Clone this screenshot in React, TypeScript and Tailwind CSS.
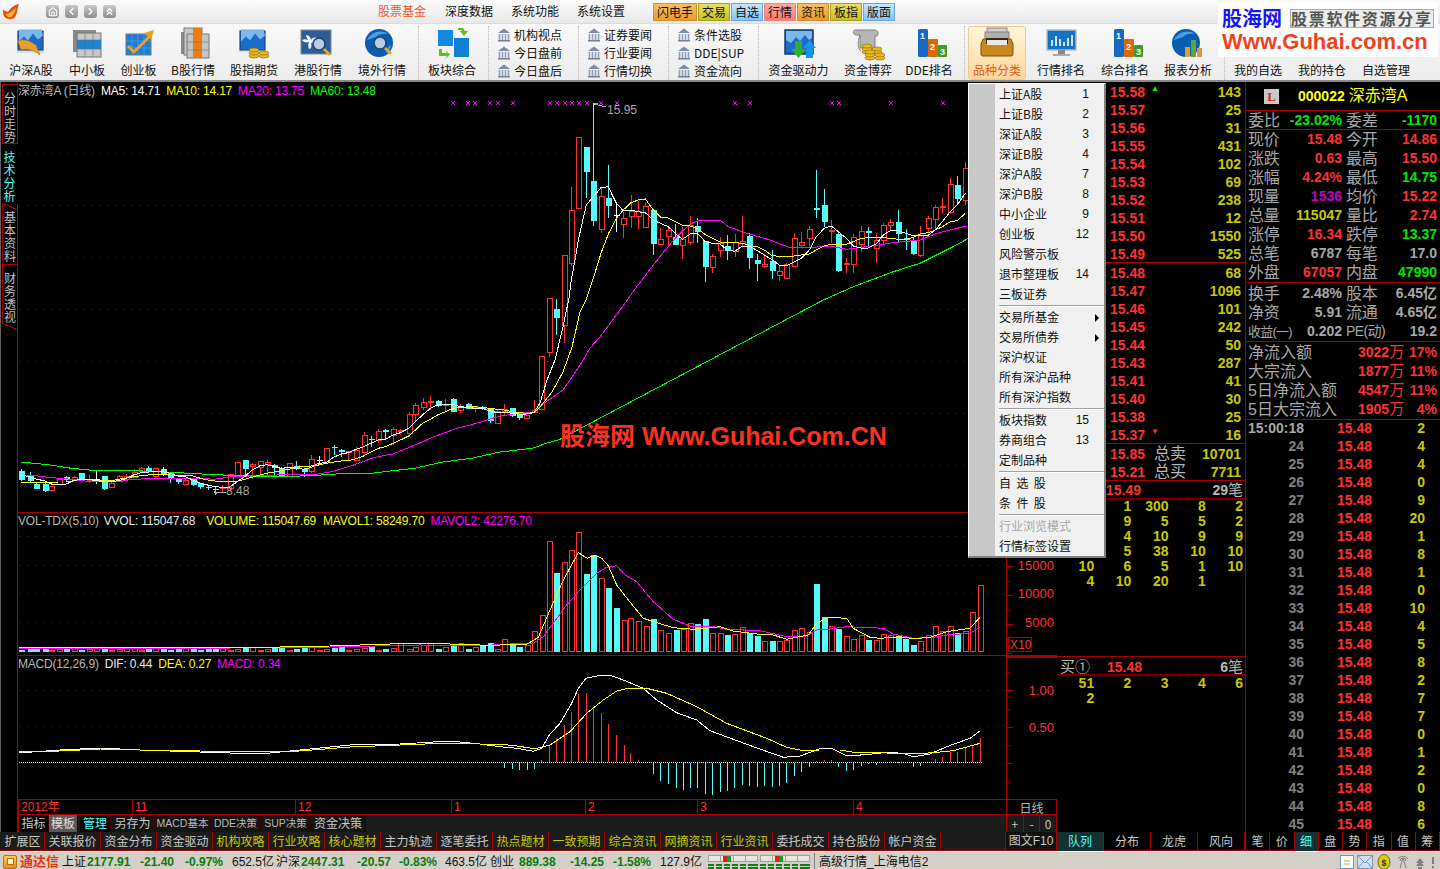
import React from "react";
import { Home, ChevronLeft, ChevronRight, ChevronsUp } from "lucide-react";

type P = [number, number];
const z8 = (x: number, y: number): P => [x / 2.8, 380 + y / 3];
const z9 = (x: number, y: number): P => [520 + x / 3, 90 + y / 3];
const z10 = (x: number, y: number): P => [500 + x / 3, 530 + y / 3];
const pts = (a: P[]) => a.map((p) => `${p[0].toFixed(1)},${p[1].toFixed(1)}`).join(" ");
const seq = (f: (x: number, y: number) => P, a: number[]) => {
  const r: P[] = [];
  for (let i = 0; i < a.length; i += 2) r.push(f(a[i], a[i + 1]));
  return r;
};

const RED = "#ff3232";
const CY = "#54fcfc";
const AX = "#a80000";
const DOT = "#7a1010";

// x, bodyTop, bodyBot, wickTop, wickBot, kind
type C = [number, number, number, number, number, string];
const c8: C[] = ([
  [60, 272, 298, 268, 302, "c"], [83, 285, 303, 277, 310, "c"], [102, 312, 328, 310, 328, "c"], [125, 312, 333, 310, 335, "c"],
  [144, 317, 330, 317, 336, "r"], [165, 296, 312, 294, 312, "r"], [186, 292, 300, 288, 305, "c"], [206, 290, 300, 288, 302, "r"],
  [228, 280, 297, 280, 300, "c"], [248, 297, 300, 285, 310, "r"], [270, 298, 299, 272, 312, "w"], [290, 288, 327, 288, 330, "c"],
  [310, 308, 321, 306, 324, "r"], [332, 288, 302, 284, 304, "r"], [352, 288, 297, 282, 300, "r"], [374, 275, 291, 267, 292, "r"],
  [394, 264, 272, 262, 273, "r"], [415, 263, 276, 258, 278, "c"], [435, 265, 290, 265, 298, "r"], [456, 268, 285, 262, 288, "c"],
  [477, 280, 295, 275, 310, "c"], [498, 296, 304, 296, 312, "c"], [518, 300, 311, 298, 312, "r"], [540, 298, 317, 296, 318, "c"],
  [561, 308, 320, 308, 328, "c"], [581, 322, 324, 315, 330, "c"], [602, 328, 332, 320, 345, "c"], [622, 322, 325, 315, 335, "r"],
  [643, 283, 325, 283, 330, "r"], [664, 247, 290, 247, 292, "r"], [685, 240, 268, 240, 285, "c"], [706, 253, 259, 250, 285, "r"],
  [727, 244, 262, 244, 290, "r"], [747, 246, 252, 240, 285, "r"], [768, 255, 263, 253, 285, "c"], [788, 265, 288, 260, 290, "c"],
  [810, 250, 288, 250, 290, "r"], [830, 258, 265, 244, 270, "c"], [851, 268, 276, 264, 290, "c"], [872, 238, 275, 225, 280, "r"],
  [892, 240, 241, 228, 250, "w"], [913, 205, 245, 205, 248, "r"], [934, 200, 204, 196, 225, "c"], [955, 209, 215, 207, 230, "c"],
  [975, 214, 217, 212, 242, "r"], [997, 209, 238, 200, 240, "r"], [1018, 166, 218, 156, 222, "r"], [1038, 178, 182, 168, 200, "c"],
  [1059, 153, 180, 146, 190, "r"], [1079, 150, 155, 147, 180, "c"], [1101, 148, 165, 140, 195, "r"], [1121, 149, 152, 148, 165, "r"],
  [1144, 103, 160, 95, 170, "r"], [1163, 75, 103, 70, 125, "r"], [1183, 65, 80, 55, 90, "r"], [1205, 62, 65, 47, 90, "r"],
  [1225, 62, 78, 60, 80, "c"], [1247, 72, 74, 58, 92, "r"], [1267, 57, 95, 55, 97, "c"], [1288, 78, 90, 73, 100, "r"],
  [1309, 72, 86, 70, 88, "c"], [1329, 82, 86, 78, 95, "r"], [1350, 82, 87, 78, 90, "c"], [1371, 88, 125, 85, 130, "c"],
  [1392, 93, 128, 88, 132, "r"], [1412, 88, 95, 72, 105, "r"], [1433, 85, 110, 83, 112, "c"], [1454, 100, 115, 95, 120, "c"],
  [1474, 105, 115, 100, 118, "r"], [1495, 90, 97, 60, 100, "r"],
] as C[]);
const c9: C[] = [
  [154, 360, 520, 290, 528, "r"], [175, 142, 356, 142, 356, "r"], [199, 171, 245, 171, 325, "c"], [220, 273, 392, 40, 408, "c"],
  [243, 318, 417, 290, 428, "r"], [265, 325, 350, 225, 384, "c"], [289, 375, 376, 335, 425, "w"], [310, 385, 403, 365, 445, "r"],
  [332, 362, 376, 315, 413, "r"], [355, 362, 377, 333, 418, "r"], [376, 348, 410, 338, 410, "r"], [400, 360, 461, 360, 494, "c"],
  [421, 448, 463, 415, 465, "r"], [445, 420, 437, 410, 470, "r"], [466, 441, 464, 402, 465, "c"], [487, 446, 464, 412, 508, "r"],
  [511, 405, 455, 378, 465, "r"], [532, 408, 426, 384, 458, "c"], [556, 454, 533, 452, 575, "c"], [577, 498, 532, 492, 548, "r"],
  [600, 460, 482, 440, 502, "r"], [622, 468, 484, 436, 510, "c"], [644, 456, 482, 432, 502, "r"], [667, 452, 459, 378, 468, "r"],
  [688, 438, 503, 430, 537, "c"], [712, 511, 524, 492, 572, "c"], [733, 523, 529, 492, 533, "r"], [757, 513, 542, 480, 568, "c"],
  [778, 544, 556, 525, 572, "r"], [799, 521, 562, 518, 562, "r"], [823, 445, 529, 430, 530, "r"], [844, 455, 464, 425, 475, "r"],
  [868, 418, 445, 408, 475, "r"], [889, 355, 361, 240, 384, "c"], [913, 346, 398, 297, 412, "c"], [934, 421, 424, 390, 460, "r"],
  [955, 432, 543, 430, 545, "c"], [979, 520, 523, 505, 550, "r"], [1000, 440, 520, 432, 548, "r"], [1024, 424, 464, 408, 485, "r"],
  [1045, 423, 430, 410, 468, "c"], [1069, 451, 475, 430, 518, "r"], [1090, 406, 452, 400, 465, "r"], [1111, 397, 406, 388, 422, "r"],
  [1135, 396, 431, 360, 458, "c"], [1157, 445, 451, 418, 480, "c"], [1180, 450, 491, 440, 495, "c"], [1201, 434, 494, 408, 502, "r"],
  [1225, 385, 415, 378, 425, "r"], [1246, 352, 388, 345, 420, "r"], [1267, 348, 352, 325, 368, "r"], [1291, 283, 368, 265, 372, "r"],
  [1312, 285, 326, 258, 345, "c"], [1336, 235, 331, 215, 345, "r"],
];
const candles: C[] = [
  ...c8.map((c): C => {
    const [x, a] = z8(c[0], c[1]);
    return [x, a, z8(0, c[2])[1], z8(0, c[3])[1], z8(0, c[4])[1], c[5]];
  }),
  [541, 356, 409, 356, 409, "r"], [549, 298, 352, 298, 357, "r"], [556, 309, 318, 299, 335, "c"], [564, 255, 325, 255, 343, "r"],
  ...c9.map((c): C => {
    const [x, a] = z9(c[0], c[1]);
    return [x, a, z9(0, c[2])[1], z9(0, c[3])[1], z9(0, c[4])[1], c[5]];
  }),
];

const ma5 = [
  ...seq(z8, [60,285,83,290,102,298,125,302,144,312,165,312,186,312,206,302,228,297,248,298,270,302,290,305,310,305,332,302,352,296,374,285,394,278,415,276,435,275,456,275,477,280,498,288,518,290,540,300,561,310,581,315,602,320,622,322,643,322,664,305,685,290,706,270,727,258,747,254,768,260,788,265,810,262,830,265,851,268,872,262,892,250,913,248,934,232,955,222,975,218,997,208,1018,200,1038,190,1059,180,1079,178,1101,165,1121,158,1144,145,1163,125,1183,105,1205,85,1225,75,1247,72,1267,72,1288,80,1309,82,1329,85,1350,85,1371,92,1392,98,1412,97,1433,100,1454,102,1474,102,1495,98]),
  [540,403],[547,380],[555,360],[563,327],[569,298] as P,
  ...seq(z9, [154,570,165,510,175,450,199,345,220,320,243,293,265,290,289,340,310,362,332,360,355,365,376,368,400,390,421,400,445,410,466,430,487,448,511,432,532,430,556,455,577,460,600,462,622,480,644,484,667,468,688,468,712,482,733,495,757,510,778,525,799,528,823,515,844,505,868,480,889,440,913,415,934,408,955,425,979,445,1000,468,1024,474,1045,474,1069,462,1090,435,1111,422,1135,422,1157,430,1180,437,1201,437,1225,436,1246,420,1267,395,1291,365,1312,345,1336,310]),
] as P[];
const ma10 = [
  ...seq(z8, [60,307,83,307,125,307,165,306,186,306,206,302,228,298,248,298,270,300,290,303,310,302,332,298,352,294,374,290,394,287,415,285,456,284,477,285,518,287,540,288,561,295,581,300,602,303,643,306,664,304,685,298,706,292,727,285,747,280,768,276,788,272,810,268,830,262,851,258,872,258,892,255,913,250,934,246,955,243,975,242,997,236,1018,228,1038,216,1059,205,1079,200,1101,190,1121,180,1144,168,1163,150,1183,130,1205,118,1225,105,1247,95,1267,85,1288,82,1329,80,1350,82,1371,85,1392,88,1412,90,1433,95,1454,98,1474,100,1495,98]),
  [540,407],[552,392],[563,372],[572,347],[580,312] as P,
  ...seq(z9, [198,630,220,565,243,490,265,432,289,385,310,360,332,338,355,330,376,327,400,360,421,381,445,384,466,395,487,405,511,408,532,415,556,434,577,445,600,456,622,458,644,458,667,460,688,466,712,470,733,480,757,497,778,499,799,499,823,498,844,495,868,492,889,480,913,468,934,463,979,463,1000,455,1024,445,1045,443,1090,443,1111,445,1135,448,1157,449,1180,442,1201,432,1225,428,1246,420,1267,410,1291,395,1312,392,1336,370]),
] as P[];
const ma20 = [
  ...seq(z8, [60,285,100,287,145,293,200,298,260,306,320,304,380,298,440,294,500,294,560,295,600,298,650,290,720,287,800,284,880,284,930,275,990,255,1050,232,1100,222,1160,196,1220,168,1280,145,1340,128,1400,108,1450,100,1495,97]),
  [540,406],[553,397],[563,390],[572,377],[582,362],[590,348],[600,337] as P,
  ...seq(z9, [322,630,350,590,400,525,440,475,470,440,510,402,540,390,600,390,625,410,680,430,750,450,810,473,880,472,930,468,980,478,1040,470,1120,458,1200,450,1250,430,1340,408]),
] as P[];
const ma60 = [
  ...seq(z8, [60,246,140,255,200,265,270,272,400,273,500,278,600,284,700,288,840,288,900,285,940,282,1030,281,1100,272,1160,265,1240,246,1320,235,1400,216,1490,205,1530,190,1568,178]),
  ...seq(z9, [910,630,1000,590,1120,545,1200,520,1290,475,1346,445]),
] as P[];

const marks = [453,468,475,490,498,513,550,557,565,572,579,587,601,617,735,750,832,839,891,943,983];

const volR: [number, number, string][] = [
  [13,328,"r"],[37,345,"c"],[58,351,"c"],[80,345,"r"],[103,304,"r"],[125,256,"r"],[148,34,"r"],[169,129,"c"],[193,97,"r"],[214,61,"r"],[235,7,"r"],[259,132,"c"],[280,76,"c"],[304,145,"r"],[325,174,"c"],[349,234,"c"],[371,271,"r"],[391,265,"r"],[415,274,"r"],[437,289,"r"],[460,267,"c"],[481,301,"r"],[505,310,"r"],[527,300,"c"],[548,298,"r"],[571,280,"r"],[592,283,"c"],[616,267,"c"],[637,310,"r"],[661,310,"r"],[682,315,"c"],[703,313,"r"],[727,292,"r"],[748,308,"c"],[772,318,"c"],[793,334,"r"],[817,333,"c"],[838,333,"r"],[859,330,"r"],[883,301,"r"],[904,295,"r"],[927,307,"r"],[949,162,"c"],[973,261,"c"],[994,289,"r"],[1015,297,"c"],[1039,319,"r"],[1060,328,"r"],[1084,316,"r"],[1105,330,"c"],[1129,330,"r"],[1150,313,"r"],[1171,316,"r"],[1195,318,"c"],[1216,327,"c"],[1240,345,"c"],[1261,334,"r"],[1285,316,"r"],[1306,289,"r"],[1327,304,"r"],[1351,289,"r"],[1372,309,"c"],[1396,304,"r"],[1417,247,"r"],[1441,166,"r"],
];
const volTop = 652;
const volLeft = candles.filter((c) => c[0] < 498).map((c, i) => ({
  x: c[0],
  top: volTop - (2 + ((i * 37) % 4) + (c[0] > 400 ? 1 + ((i * 13) % 4) : 0)),
  k: c[5] === "c" ? "c" : "r",
}));
const volYellow = [[19,647],[120,647],[230,648],[330,646],[420,643],[480,645] as P].concat(seq(z10, [0,345,80,343,115,322,150,240,190,150,235,68,262,85,285,75,305,85,325,107,350,165,385,210,430,265,470,278,520,293,580,298,660,290,700,303,770,312,820,315,860,328,925,315,950,280,985,262,1040,265,1060,295,1110,322,1140,325,1200,320,1240,326,1290,322,1340,305,1410,295,1440,262])) as P[];
const volMag = [[19,648],[120,648],[230,648],[330,647],[420,645],[480,646] as P].concat(seq(z10, [0,343,100,340,130,320,200,225,240,180,290,130,320,112,350,107,375,135,410,155,460,215,520,268,570,288,640,290,680,298,780,302,860,320,920,318,950,300,990,297,1040,290,1150,295,1180,312,1240,325,1300,322,1340,315,1410,310,1440,292])) as P[];

const macdBars: [number, number][] = [
  [13,714],[37,717],[58,720],[80,720],[103,716],[124,690],[148,643],[169,625],[193,585],[214,546],[235,492],[259,489],[280,530],[304,549],[325,582],[349,615],[371,645],[391,669],[415,690],[460,732],[481,752],[505,762],[527,773],[548,779],[571,774],[592,773],[616,791],[637,794],[661,785],[682,782],[703,774],[727,765],[748,768],[772,770],[793,768],[817,770],[838,768],[859,759],[883,738],[904,726],[927,711],[949,694],[973,690],[994,690],[1015,711],[1039,722],[1060,720],[1084,708],[1105,702],[1129,705],[1171,694],[1195,696],[1240,711],[1261,708],[1306,688],[1327,682],[1351,665],[1372,665],[1396,655],[1417,646],[1441,625],
];
const macdW = [[19,753],[60,750],[100,748],[140,750],[200,752],[260,754],[300,750],[350,745],[400,744],[450,741],[480,744] as P].concat(seq(z10, [0,650,50,655,100,664,125,655,148,615,180,580,215,520,235,475,258,445,300,436,330,436,370,450,430,475,470,510,530,548,590,570,630,602,700,628,760,650,850,682,900,678,960,656,1000,657,1040,677,1100,674,1160,667,1210,670,1240,680,1290,672,1340,650,1410,625,1440,603])) as P[];
const macdY = [[19,752],[60,751],[100,749],[140,750],[200,751],[260,752],[300,751],[350,747],[400,745],[450,743],[480,744] as P].concat(seq(z10, [0,642,50,648,105,656,150,645,210,605,260,550,310,510,350,483,385,475,440,475,500,490,590,530,680,580,800,625,860,652,905,661,960,660,1020,660,1060,667,1160,669,1250,671,1300,668,1360,662,1440,640])) as P[];

function Svg({ top, h, children }: { top: number; h: number; children: React.ReactNode }) {
  return (
    <svg className="absolute left-0 top-0" width={1039} height={h} viewBox={`18 ${top} 1039 ${h}`} shapeRendering="crispEdges">
      <rect x={1006} y={top} width={1} height={h} fill={AX} />
      {children}
    </svg>
  );
}
const Dots = ({ ys, c = DOT }: { ys: number[]; c?: string }) => (
  <>
    {ys.map((y) => (
      <line key={y} x1={19} x2={1006} y1={y + 0.5} y2={y + 0.5} stroke={c} strokeDasharray="1 7" />
    ))}
  </>
);
const Line = ({ p, c }: { p: P[]; c: string }) => <polyline points={pts(p)} fill="none" stroke={c} strokeWidth={1} />;

function PriceChart() {
  return (
    <Svg top={82} h={430}>
      <Dots ys={[153, 205, 257, 309, 361, 413, 465]} />
      {marks.map((x) => (
        <path key={x} d={`M${x - 2} 101l4 4M${x + 2} 101l-4 4`} stroke="#ff00ff" fill="none" />
      ))}
      {candles.map((c, i) => {
        const x = Math.round(c[0]);
        const col = c[5] === "r" ? RED : c[5] === "c" ? CY : "#ffffff";
        return (
          <g key={i}>
            {c[5] === "r" ? (
              <>
                <line x1={x + 0.5} x2={x + 0.5} y1={c[3]} y2={c[1]} stroke={col} />
                <line x1={x + 0.5} x2={x + 0.5} y1={c[2]} y2={c[4]} stroke={col} />
                <rect x={x - 2} y={Math.round(c[1]) + 0.5} width={5} height={Math.max(1, Math.round(c[2] - c[1]))} fill="#000" stroke={col} />
              </>
            ) : (
              <>
                <line x1={x + 0.5} x2={x + 0.5} y1={c[3]} y2={c[4]} stroke={col} />
                <rect x={x - 2} y={Math.round(c[1])} width={6} height={Math.max(1, Math.round(c[2] - c[1]))} fill={col} />
              </>
            )}
          </g>
        );
      })}
      <Line p={ma60} c="#00ff00" />
      <Line p={ma20} c="#ff00ff" />
      <Line p={ma10} c="#ffff00" />
      <Line p={ma5} c="#ffffff" />
      <path d="M594 104l4 -1M594 104l12 3" stroke="#b0b0b0" fill="none" />
      <text x={607} y={114} fontSize={12} fill="#a8a8a8" fontFamily="Liberation Sans">15.95</text>
      <path d="M214 492l3 -3M214 492l3 2M214 492h12" stroke="#b0b0b0" fill="none" />
      <text x={226} y={495} fontSize={12} fill="#a8a8a8" fontFamily="Liberation Sans">8.48</text>
    </Svg>
  );
}

function VolChart() {
  const ticks = [];
  for (let y = 537; y < 655; y += 14.5) ticks.push(y);
  return (
    <Svg top={513} h={143}>
      <rect x={18} y={655} width={1039} height={1} fill={AX} />
      <Dots ys={[536, 565, 593, 622]} />
      {volLeft.map((v, i) => {
        const x = Math.round(v.x);
        return v.k === "c" ? (
          <rect key={i} x={x - 2} y={v.top} width={6} height={volTop - v.top} fill={CY} />
        ) : (
          <rect key={i} x={x - 2} y={v.top + 0.5} width={5} height={volTop - v.top - 1} fill="#000" stroke={RED} />
        );
      })}
      {volR.map((v, i) => {
        const x = Math.round(500 + v[0] / 3);
        const t = Math.round(530 + v[1] / 3);
        return v[2] === "c" ? (
          <rect key={i} x={x - 2} y={t} width={6} height={volTop - t} fill={CY} />
        ) : (
          <rect key={i} x={x - 2} y={t + 0.5} width={5} height={volTop - t - 1} fill="#000" stroke={RED} />
        );
      })}
      <Line p={volMag} c="#ff00ff" />
      <Line p={volYellow} c="#ffff00" />
      {ticks.map((y, i) => (
        <rect key={y} x={1007} y={Math.round(y)} width={i % 2 === 0 ? 6 : 3} height={1} fill={AX} />
      ))}
      {[["15000", 570], ["10000", 598], ["5000", 627]].map(([t, y]) => (
        <text key={t} x={1054} y={Number(y)} textAnchor="end" fontSize={13} fill={RED} fontFamily="Liberation Sans">{t}</text>
      ))}
      <rect x={1008.5} y={637.5} width={23} height={14} fill="none" stroke={AX} />
      <text x={1010} y={649} fontSize={12} fill={RED} fontFamily="Liberation Sans">X10</text>
    </Svg>
  );
}

function MacdChart() {
  const ticks = [];
  for (let y = 672; y < 798; y += 18.3) ticks.push(y);
  return (
    <Svg top={656} h={143}>
      <rect x={1006} y={656} width={52} height={2} fill={AX} />
      <Dots ys={[690, 726]} />
      <line x1={19} x2={982} y1={762.5} y2={762.5} stroke="#ffffff" strokeDasharray="1 1" />
      {macdBars.map((b, i) => {
        const x = Math.round(500 + b[0] / 3);
        const y = 530 + b[1] / 3;
        return y < 762 ? (
          <line key={i} x1={x + 0.5} x2={x + 0.5} y1={y} y2={762} stroke={RED} />
        ) : (
          <line key={i} x1={x + 0.5} x2={x + 0.5} y1={763} y2={y} stroke={CY} />
        );
      })}
      <Line p={macdW} c="#ffffff" />
      <Line p={macdY} c="#ffff00" />
      {ticks.map((y, i) => (
        <rect key={y} x={1007} y={Math.round(y)} width={i % 2 === 1 ? 6 : 3} height={1} fill={AX} />
      ))}
      <text x={1054} y={695} textAnchor="end" fontSize={13} fill={RED} fontFamily="Liberation Sans">1.00</text>
      <text x={1054} y={732} textAnchor="end" fontSize={13} fill={RED} fontFamily="Liberation Sans">0.50</text>
    </Svg>
  );
}

/* ---------- toolbar icons ---------- */
const Blue = ({ x, y, w, h }: { x: number; y: number; w: number; h: number }) => (
  <>
    <rect x={x} y={y} width={w} height={h} fill="#1a6cc8" stroke="#1b3d6e" />
    <path d={`M${x + 1} ${y + h * 0.55}l5 -5 4 4 5 -7 5 6 5 -4 ${w - 26} -3v${-h * 0.15}H${x + 1}z`} fill="#7cb8ee" />
  </>
);
const Bars123 = () => (
  <g>
    <rect x={9} y={2} width={10} height={28} rx={1.5} fill="#1668c0" />
    <rect x={19} y={12} width={10} height={18} rx={1} fill="#d96a0c" />
    <rect x={29} y={18} width={9} height={12} rx={1} fill="#3f9a2f" />
    <text x={11} y={12} fontSize={9} fontWeight={700} fill="#fff" fontFamily="Liberation Sans">1</text>
    <text x={21} y={23} fontSize={9} fontWeight={700} fill="#fff" fontFamily="Liberation Sans">2</text>
    <text x={31} y={28} fontSize={9} fontWeight={700} fill="#fff" fontFamily="Liberation Sans">3</text>
  </g>
);
const Coins = ({ x, y }: { x: number; y: number }) => (
  <g fill="#e8b820" stroke="#8a6500" strokeWidth={0.6}>
    <ellipse cx={x} cy={y + 6} rx={5} ry={2} />
    <ellipse cx={x} cy={y + 3} rx={5} ry={2} />
    <ellipse cx={x} cy={y} rx={5} ry={2} />
    <ellipse cx={x + 10} cy={y + 6} rx={5} ry={2} />
    <ellipse cx={x + 10} cy={y + 3} rx={5} ry={2} />
  </g>
);
const Glass = ({ x, y, r = 6 }: { x: number; y: number; r?: number }) => (
  <g>
    <circle cx={x} cy={y} r={r} fill="#b8cce0" stroke="#26456e" strokeWidth={1.6} />
    <path d={`M${x + r - 1} ${y + r - 1}l6 6`} stroke="#e0a830" strokeWidth={2.6} />
  </g>
);
const Icon = ({ n }: { n: string }) => {
  const parts: Record<string, React.ReactNode> = {
    a: (
      <>
        <rect x={6} y={4} width={27} height={22} fill="#dcdcdc" />
        <Blue x={7} y={4} w={25} h={19} />
        <path d="M7 14c6-3 12 0 18 4l4 10c-6-5-12-7-19-5z" fill="#e8a22c" stroke="#a86a12" strokeWidth={0.6} />
      </>
    ),
    b: (
      <>
        <rect x={6} y={3} width={23} height={22} fill="#8a8a8a" />
        <rect x={10} y={6} width={24} height={24} fill="#c8c8c8" stroke="#777" />
        <rect x={10} y={13} width={24} height={9} fill="#1b86d8" />
        <path d="M18 6v24M26 6v24M10 13h24M10 22h24" stroke="#666" strokeWidth={0.6} />
      </>
    ),
    c: (
      <>
        <rect x={7} y={7} width={25} height={21} fill="#1f7bd6" stroke="#777" />
        <path d="M13 7v21M19 7v21M25 7v21M7 14h25M7 21h25" stroke="#5aa5e8" strokeWidth={0.6} />
        <path d="M9 19l6 6 15-15" fill="none" stroke="#f0a020" strokeWidth={3} />
        <path d="M25 6l10-3-3 10z" fill="#f0a020" />
      </>
    ),
    d: (
      <>
        <rect x={8} y={5} width={21} height={22} fill="#8a8a8a" />
        <rect x={11} y={1} width={18} height={27} fill="#c8c8c8" stroke="#777" />
        <rect x={14} y={7} width={22} height={24} fill="#c4c4c4" stroke="#777" />
        <rect x={20} y={1} width={9} height={30} fill="#ed7d12" />
        <path d="M14 15h22M14 23h22" stroke="#777" strokeWidth={0.6} />
      </>
    ),
    e: (
      <>
        <rect x={5} y={3} width={27} height={22} fill="#dcdcdc" />
        <Blue x={6} y={4} w={25} h={19} />
        <Coins x={20} y={23} />
      </>
    ),
    f: (
      <>
        <rect x={3} y={3} width={30} height={24} fill="#2c5f96" stroke="#888" />
        <path d="M8 8c3 0 5 3 5 5 2-3 6-3 6-1-2 3-4 4-6 4 1 3 0 6-2 6-1-3-1-5 0-7-3 1-6 0-7-2 2-1 4-1 6 0-1-2-2-3-2-5z" fill="#eef4fa" />
        <Glass x={21} y={17} r={6} />
      </>
    ),
    g: (
      <>
        <circle cx={17} cy={16} r={14} fill="#0a5cb0" />
        <path d="M5 13c4-8 14-11 21-6-6-1-10 0-12 3-3 1-6 2-9 3zM24 26c3-2 5-5 5-8-2 1-4 3-5 8z" fill="#4aa0e4" />
        <Glass x={18} y={16} r={6} />
      </>
    ),
    h: (
      <>
        <rect x={6} y={3} width={15} height={16} fill="#158ae0" />
        <rect x={22} y={11} width={15} height={19} fill="#1080d8" />
        <path d="M26 1h5l2 3h3l-4 5-4-5h2l-1-1h-3zM7 22h3v4h5l-2-3 5 4.500-5 4.500 2-3H7z" fill="#5cc020" />
      </>
    ),
    i: (
      <>
        <rect x={6} y={3} width={28} height={24} fill="#1a6cc8" stroke="#183a68" strokeWidth={1.5} />
        <path d="M7 13l5 3 5-6 4 4 5-6 4 5 3-2v-7H7z" fill="#7cb8ee" />
        <path d="M16 14h7v8h4l-7.500 9L12 22h4z" fill="#30b030" />
        <path d="M27 31v-10h-3l6.500-8 6.500 8h-3v10z" fill="#1a90e8" />
      </>
    ),
    j: (
      <>
        <path d="M7 3h20c3 0 4 4 2 6H27v12H12V8H8C5 8 5 3 7 3z" fill="#b6b6b6" stroke="#808080" />
        <path d="M12 8c-3 8-2 14 1 16" fill="none" stroke="#808080" />
        <Coins x={19} y={19} />
        <Coins x={22} y={25} />
      </>
    ),
    k: <Bars123 />,
    l: (
      <>
        <rect x={10} y={1} width={20} height={14} fill="#d0d0d0" stroke="#888" />
        <rect x={8} y={5} width={24} height={12} fill="#b0b0b0" stroke="#808080" />
        <path d="M6 12h28l2 5v10a2 2 0 0 1-2 2H6a2 2 0 0 1-2-2V17z" fill="#c88a1e" stroke="#7a5210" />
        <path d="M9 11h22v6H9z" fill="#3a2a10" />
        <path d="M10 13h20v5H10z" fill="#e8e8e8" />
      </>
    ),
    m: (
      <>
        <rect x={6} y={3} width={29} height={20} fill="#1172c8" stroke="#bbb" strokeWidth={1.5} />
        <path d="M11 19v-6M15 19v-10M19 19v-7M23 19v-4M27 19v-8M31 19v-11" stroke="#cde4fa" strokeWidth={2} />
        <rect x={17} y={23} width={7} height={4} fill="#888" />
        <rect x={12} y={27} width={17} height={2} fill="#aaa" />
      </>
    ),
    n: (
      <>
        <circle cx={18} cy={16} r={14} fill="#0a5cb0" />
        <path d="M6 13c4-8 14-11 21-6-6-1-10 0-12 3-3 1-6 2-9 3z" fill="#4aa0e4" />
        <rect x={17} y={20} width={5} height={10} fill="#e8a020" />
        <rect x={23} y={13} width={5} height={17} fill="#58a838" />
        <rect x={29} y={21} width={5} height={9} fill="#e89040" />
      </>
    ),
  };
  return (
    <svg width={40} height={34} viewBox="0 0 40 34" className="shrink-0">
      {parts[n]}
    </svg>
  );
};

const Bank = () => (
  <svg width={14} height={14} viewBox="0 0 14 14" className="shrink-0">
    <path d="M7 0.500L13 5H1z" fill="#7d8ea6" />
    <path d="M2.500 6v6M5.500 6v6M8.500 6v6M11.500 6v6" stroke="#8fa0b8" strokeWidth={1.6} />
    <rect x={1} y={12} width={12} height={1.5} fill="#6f8098" />
  </svg>
);

const Tool = ({ w, n, t, active }: { w: string; n: string; t: string; active?: boolean }) => (
  <div className={`${w} h-[54px] mt-[2px] flex flex-col items-center shrink-0 rounded-[3px] ${active ? "bg-gradient-to-b from-[#fff6dc] to-[#ffd69a] border border-[#f0c890]" : ""}`}>
    <div className={active ? "mt-[0px]" : "mt-[1px]"}>
      <Icon n={n} />
    </div>
    <div className={`text-[12px] leading-[14px] mt-[2px] whitespace-nowrap ${active ? "text-[#e8581a]" : "text-[#111]"}`}>{t}</div>
  </div>
);
const Sep = ({ w = "w-[10px]" }: { w?: string }) => (
  <div className={`${w} shrink-0 flex justify-center`}>
    <div className="h-[54px] mt-[2px] border-l border-dotted border-[#bbb]" />
  </div>
);
const Mini = ({ items }: { items: string[] }) => (
  <div className="w-[90px] shrink-0 h-[54px] mt-[2px] border-l border-dotted border-[#bbb] pl-[8px] flex flex-col">
    {items.map((t) => (
      <div key={t} className="h-[18px] flex items-center gap-[3px] text-[12px] whitespace-nowrap text-[#111]">
        <Bank />
        <span>{t}</span>
      </div>
    ))}
  </div>
);

const TopTab = ({ t, w, cls }: { t: string; w: string; cls: string }) => (
  <div className={`${w} h-[18px] flex items-center justify-center text-[12px] text-[#111] border ${cls}`}>{t}</div>
);
const NavBtn = ({ children }: { children: React.ReactNode }) => (
  <div className="w-[13px] h-[13px] rounded-[3px] bg-gradient-to-b from-[#c8c8c8] to-[#8e8e8e] flex items-center justify-center text-white">
    {children}
  </div>
);

function TopBar() {
  return (
    <div className="h-[23px] flex items-center bg-gradient-to-b from-[#fbfbfb] to-[#e8e8e8] shrink-0">
      <svg width={18} height={18} viewBox="0 0 18 18" className="ml-[2px] shrink-0">
        <path d="M1 7l5 2c2-3 5-7 11-8-2 4-1 9-4 13-2 3-9 3-11-1-1-2-1-4-1-6z" fill="#e84e14" />
        <path d="M4 11c3 0 6-3 10-6-1 3-2 7-5 9-2 1-5-1-5-3z" fill="#f7b02c" />
      </svg>
      <div className="ml-[26px] flex gap-[6px]">
        <NavBtn><Home size={10} strokeWidth={2.5} /></NavBtn>
        <NavBtn><ChevronLeft size={11} strokeWidth={3} /></NavBtn>
        <NavBtn><ChevronRight size={11} strokeWidth={3} /></NavBtn>
        <NavBtn><ChevronsUp size={11} strokeWidth={3} /></NavBtn>
      </div>
      <div className="ml-[262px] flex text-[12px] text-[#111] whitespace-nowrap pb-[1px]">
        <span className="w-[67px] text-[#f0562a]">股票基金</span>
        <span className="w-[66px]">深度数据</span>
        <span className="w-[66px]">系统功能</span>
        <span className="w-[76px]">系统设置</span>
      </div>
      <div className="flex gap-[1px]">
        <TopTab t="闪电手" w="w-[44px]" cls="bg-gradient-to-b from-[#f8c060] to-[#e89a28] border-[#d09030]" />
        <TopTab t="交易" w="w-[32px]" cls="bg-gradient-to-b from-[#e8e060] to-[#c8c020] border-[#a8a020]" />
        <TopTab t="自选" w="w-[32px]" cls="bg-gradient-to-b from-[#c8e4fc] to-[#88c4f4] border-[#60a8e8]" />
        <TopTab t="行情" w="w-[32px]" cls="bg-gradient-to-b from-[#ffa8a0] to-[#f87870] border-[#f08880]" />
        <TopTab t="资讯" w="w-[32px]" cls="bg-gradient-to-b from-[#f8c060] to-[#e89a28] border-[#d09030]" />
        <TopTab t="板指" w="w-[32px]" cls="bg-gradient-to-b from-[#e8e060] to-[#c8c020] border-[#a8a020]" />
        <TopTab t="版面" w="w-[32px]" cls="bg-gradient-to-b from-[#c8e4fc] to-[#88c4f4] border-[#60a8e8]" />
      </div>
    </div>
  );
}

function Toolbar() {
  return (
    <div className="relative h-[59px] shrink-0 flex bg-gradient-to-b from-[#f9f9f9] to-[#ececec] border-t border-[#dcdcdc] border-b-2 border-b-[#8a8a8a] pl-[2px]">
      <Tool w="w-[58px]" n="a" t="沪深A股" />
      <Tool w="w-[54px]" n="b" t="中小板" />
      <Tool w="w-[49px]" n="c" t="创业板" />
      <Tool w="w-[60px]" n="d" t="B股行情" />
      <Tool w="w-[62px]" n="e" t="股指期货" />
      <Tool w="w-[66px]" n="f" t="港股行情" />
      <Tool w="w-[62px]" n="g" t="境外行情" />
      <Sep />
      <Tool w="w-[58px]" n="h" t="板块综合" />
      <div className="w-[7px] shrink-0" />
      <Mini items={["机构视点", "今日盘前", "今日盘后"]} />
      <Mini items={["证券要闻", "行业要闻", "行情切换"]} />
      <Mini items={["条件选股", "DDE|SUP", "资金流向"]} />
      <div className="border-l border-dotted border-[#bbb] h-[54px] mt-[2px]" />
      <Tool w="w-[79px]" n="i" t="资金驱动力" />
      <Tool w="w-[60px]" n="j" t="资金博弈" />
      <Tool w="w-[62px]" n="k" t="DDE排名" />
      <Sep w="w-[8px]" />
      <Tool w="w-[58px]" n="l" t="品种分类" active />
      <Tool w="w-[70px]" n="m" t="行情排名" />
      <Tool w="w-[58px]" n="k" t="综合排名" />
      <Tool w="w-[68px]" n="n" t="报表分析" />
      <Sep w="w-[4px]" />
      <div className="w-[64px] shrink-0 pt-[39px] text-center text-[12px] leading-[14px] text-[#111]">我的自选</div>
      <div className="w-[64px] shrink-0 pt-[39px] text-center text-[12px] leading-[14px] text-[#111]">我的持仓</div>
      <div className="w-[64px] shrink-0 pt-[39px] text-center text-[12px] leading-[14px] text-[#111]">自选管理</div>
    </div>
  );
}

function Watermark() {
  return (
    <div className="absolute left-[1218px] top-[2px] w-[220px] h-[55px] bg-white/95 pl-[4px] pt-[3px]">
      <div className="flex items-center h-[26px]">
        <span className="text-[20px] leading-[24px] font-bold text-[#1414ff] w-[68px]">股海网</span>
        <span className="text-[16px] leading-[17px] w-[144px] text-[#555] bg-[#ececec] tracking-[1.7px] font-bold border border-[#aaa] whitespace-nowrap">股票软件资源分享</span>
      </div>
      <div className="text-[22px] leading-[22px] font-bold text-[#f0421a] whitespace-nowrap font-['Liberation_Sans']">Www.Guhai.com.cn</div>
    </div>
  );
}

/* ---------- chart headers ---------- */
const Num = "font-['Liberation_Sans','Noto_Sans_CJK_SC',sans-serif]";

function Center() {
  return (
    <div className="w-[1039px] shrink-0 flex flex-col">
      <div className="relative h-[430px]">
        <PriceChart />
        <div className={`relative h-[18px] flex items-center text-[12px] tracking-[-0.2px] ${Num} whitespace-nowrap gap-[6px]`}>
          <span className="text-[#b8b8b8]">深赤湾A (日线)</span>
          <span className="text-white">MA5: 14.71</span>
          <span className="text-[#ffff00]">MA10: 14.17</span>
          <span className="text-[#ff00ff]">MA20: 13.75</span>
          <span className="text-[#00ff00]">MA60: 13.48</span>
        </div>
        <div className={`absolute left-[542px] top-[338px] text-[25px] leading-[32px] font-bold text-[#ff3020] whitespace-nowrap ${Num}`}>股海网 Www.Guhai.Com.CN</div>
      </div>
      <div className="h-[1px] bg-[#a80000]" />
      <div className="relative h-[143px]">
        <VolChart />
        <div className={`relative h-[15px] flex items-center text-[12px] tracking-[-0.2px] ${Num} whitespace-nowrap`}>
          <span className="text-[#b8b8b8] mr-[5px]">VOL-TDX(5,10)</span>
          <span className="text-[#e8e8e8] mr-[11px]">VVOL: 115047.68</span>
          <span className="text-[#ffff00] mr-[7px]">VOLUME: 115047.69</span>
          <span className="text-[#ffff00] mr-[6px]">MAVOL1: 58249.70</span>
          <span className="text-[#ff00ff]">MAVOL2: 42276.70</span>
        </div>
      </div>
      <div className="relative h-[143px]">
        <MacdChart />
        <div className={`relative h-[15px] flex items-center text-[12px] tracking-[-0.2px] ${Num} whitespace-nowrap gap-[6px]`}>
          <span className="text-[#b8b8b8]">MACD(12,26,9)</span>
          <span className="text-[#e8e8e8]">DIF: 0.44</span>
          <span className="text-[#ffff00]">DEA: 0.27</span>
          <span className="text-[#ff00ff]">MACD: 0.34</span>
        </div>
      </div>
      <DateRow />
      <TabRow />
    </div>
  );
}

function DateRow() {
  const segs: [string, string][] = [
    ["2012年", "w-[114px]"], ["11", "w-[163px]"], ["12", "w-[156px]"], ["1", "w-[134px]"], ["2", "w-[112px]"], ["3", "w-[156px]"], ["4", "w-[153px]"],
  ];
  return (
    <div className="h-[16px] flex border-t border-[#a80000] border-b border-b-[#a80000] shrink-0">
      {segs.map(([t, w]) => (
        <div key={t} className={`${w} shrink-0 border-l border-[#a80000] pl-[2px] text-[12px] leading-[15px] text-[#ff3232] ${Num}`}>{t}</div>
      ))}
      <div className="flex-1 border-l border-r border-[#a80000] text-center text-[12px] leading-[15px] text-[#b8b8b8]">日线</div>
    </div>
  );
}

function TabRow() {
  const tabs: [string, string, string][] = [
    ["指标", "w-[30px]", "bg-black text-[#c8c8c8] text-[12px]"], ["模板", "w-[29px]", "bg-[#585858] text-[#e0e0e0] text-[12px]"], ["管理", "w-[31px] ml-[2px]", "bg-black text-[#54fcfc] text-[12px]"],
    ["另存为", "w-[44px]", "bg-[#141414] text-[#c8c8c8] text-[12px]"], ["MACD基本", "w-[56px]", "bg-[#141414] text-[#b8b8b8] text-[10.5px]"], ["DDE决策", "w-[50px]", "bg-[#141414] text-[#b8b8b8] text-[10.5px]"],
    ["SUP决策", "w-[50px]", "bg-[#141414] text-[#b8b8b8] text-[10.5px]"], ["资金决策", "w-[55px]", "bg-[#141414] text-[#c8c8c8] text-[12px]"],
  ];
  return (
    <div className="h-[17px] flex shrink-0 bg-[#1c1c1c]">
      <div className="w-[988px] flex border-l border-[#a80000]">
        {tabs.map(([t, w, c]) => (
          <div key={t} className={`${w} shrink-0 h-[17px] pt-[1px] flex items-center justify-center whitespace-nowrap border-r border-[#3a0000] ${c} ${Num}`}>{t}</div>
        ))}
      </div>
      <div className="flex-1 flex border-l border-r border-[#a80000] text-[#c8c8c8] text-[12px] leading-[17px] text-center">
        <div className="flex-1 border-r border-[#a80000]">+</div>
        <div className="flex-1 border-r border-[#a80000]">-</div>
        <div className="flex-1">0</div>
      </div>
    </div>
  );
}

/* ---------- side ---------- */
function SideTabs() {
  const tabs: [string, string, string][] = [
    ["分时走势", "h-[60px]", "text-[#c0c0c0] border border-[#a80000]"],
    ["技术分析", "h-[60px]", "text-[#54fcfc] border-r border-r-black"],
    ["基本资料", "h-[60px]", "text-[#c0c0c0] border-l border-r border-[#a80000]"],
    ["财务透视", "h-[60px]", "text-[#c0c0c0] border-t border-l border-r border-[#a80000]"],
  ];
  return (
    <div className="w-[18px] shrink-0 flex flex-col bg-black pl-[1px] border-l border-[#606060] relative">
      <div className="h-[2px] border-r border-[#a80000]" />
      {tabs.map(([t, h, c]) => (
        <div key={t} className={`${h} w-[16px] shrink-0 pt-[6px] flex justify-center ${c}`}>
          <div className="w-[12px] text-[12px] leading-[13px] break-all">{t}</div>
        </div>
      ))}
      <div className="flex-1 border-r border-[#a80000] w-[16px]" />
      <svg width={16} height={8} className="absolute left-[1px] top-[121px]" shapeRendering="crispEdges">
        <path d="M0 0L16 7" stroke="#a80000" fill="none" />
      </svg>
      <svg width={16} height={8} className="absolute left-[1px] top-[241px]" shapeRendering="crispEdges">
        <path d="M0 0L16 7" stroke="#a80000" fill="none" />
      </svg>
    </div>
  );
}

/* ---------- order book ---------- */
const sells: [string, string][] = [["15.58","143"],["15.57","25"],["15.56","31"],["15.55","431"],["15.54","102"],["15.53","69"],["15.52","238"],["15.51","12"],["15.50","1550"],["15.49","525"]];
const buys: [string, string][] = [["15.48","68"],["15.47","1096"],["15.46","101"],["15.45","242"],["15.44","50"],["15.43","287"],["15.41","41"],["15.40","30"],["15.38","25"],["15.37","16"]];

const BookRow = ({ p, v, mark }: { p: string; v: string; mark?: string }) => (
  <div className="h-[18px] pl-[53px] pr-[4px] flex items-center justify-between">
    <span className="text-[#ff3232] relative">
      {p}
      {mark === "u" && <span className="absolute left-[41px] top-[1px] text-[#00ff00] text-[8px]">▲</span>}
      {mark === "d" && <span className="absolute left-[41px] top-[1px] text-[#ff3232] text-[8px]">▼</span>}
    </span>
    <span className="text-[#c8c800]">{v}</span>
  </div>
);

const QueueRow = ({ c }: { c: string[] }) => (
  <div className="h-[15px] grid grid-cols-5 pr-[2px] text-[#c8c800]">
    {c.map((t, i) => (
      <div key={i} className="text-right leading-[15px]">{t}</div>
    ))}
  </div>
);

function Middle() {
  return (
    <div className={`w-[188px] shrink-0 flex flex-col font-bold text-[14px] ${Num}`}>
      <div className="pt-[1px] h-[181px] border-b border-[#a80000]">
        {sells.map((s, i) => <BookRow key={s[0]} p={s[0]} v={s[1]} mark={i === 0 ? "u" : undefined} />)}
      </div>
      <div className="pt-[1px] h-[181px] border-b border-[#a80000]">
        {buys.map((s, i) => <BookRow key={s[0]} p={s[0]} v={s[1]} mark={i === 9 ? "d" : undefined} />)}
      </div>
      <div className="pt-[1px] h-[37px] border-b border-[#a80000]">
        {[["15.85", "总卖", "10701"], ["15.21", "总买", "7711"]].map(([a, b, c]) => (
          <div key={b} className="h-[18px] pl-[53px] pr-[4px] flex items-center justify-between relative">
            <span className="text-[#ff3232]">{a}</span>
            <span className="absolute left-[97px] font-normal text-[16px] text-[#b8b8b8]">{b}</span>
            <span className="text-[#c8c800]">{c}</span>
          </div>
        ))}
      </div>
      <div className="h-[18px] pt-[2px] pl-[49px] pr-[2px] flex items-center justify-between border-b border-dotted border-[#a80000]">
        <span className="text-[#ff3232]">15.49</span>
        <span className="text-[#b8b8b8]">29<span className="font-normal text-[15px]">笔</span></span>
      </div>
      {[["", "1", "300", "8", "2"], ["", "9", "5", "5", "2"], ["", "4", "10", "9", "9"], ["", "5", "38", "10", "10"], ["10", "6", "5", "1", "10"], ["4", "10", "20", "1", ""]].map((r, i) => (
        <QueueRow key={i} c={r} />
      ))}
      <div className="h-[68px] border-b border-[#a80000]" />
      <div className="h-[18px] pt-[3px] pl-[3px] pr-[2px] flex items-center border-b border-dotted border-[#a80000] relative">
        <span className="font-normal text-[15px] text-[#b8b8b8] w-[47px] whitespace-nowrap">买①</span>
        <span className="text-[#ff3232]">15.48</span>
        <span className="ml-auto text-[#b8b8b8]">6<span className="font-normal text-[15px]">笔</span></span>
      </div>
      <div className="pt-[1px]">
        <QueueRow c={["51", "2", "3", "4", "6"]} />
        <QueueRow c={["2", "", "", "", ""]} />
      </div>
    </div>
  );
}

/* ---------- right quote ---------- */
const Q = ({ a, b, ca, c, d, cb, s }: { a: string; b: string; ca: string; c: string; d: string; cb: string; s?: boolean }) => (
  <div className="h-[19px] flex items-center pl-[2px] pr-[3px] whitespace-nowrap">
    <span className={`w-[38px] font-normal text-[#a8a8a8] ${s ? "text-[13px] tracking-[-0.8px]" : "text-[16px] tracking-[-0.3px]"}`}>{a}</span>
    <span className={`w-[56px] text-right ${ca}`}>{b}</span>
    <span className={`ml-[4px] w-[36px] font-normal text-[#a8a8a8] ${s ? "text-[14px] tracking-[-0.6px]" : "text-[16px] tracking-[-0.3px]"}`}>{c}</span>
    <span className={`flex-1 text-right ${cb}`}>{d}</span>
  </div>
);
const Flow = ({ a, b, c }: { a: string; b: string; c: string }) => (
  <div className="h-[19px] flex items-center pl-[2px] pr-[3px] whitespace-nowrap">
    <span className="text-[16px] font-normal text-[#a8a8a8] w-[110px]">{a}</span>
    <span className="text-[#ff3232] w-[46px] text-right">{b}<span className="font-normal text-[15px]">万</span></span>
    <span className="text-[#ff3232] flex-1 text-right">{c}</span>
  </div>
);
const r = "text-[#ff3232]";
const g = "text-[#00e600]";
const gy = "text-[#a8a8a8]";
const tickVols = ["4","4","0","9","20","1","8","1","0","10","4","5","8","2","7","7","0","1","2","0","8","6"];

function Right() {
  return (
    <div className={`flex-1 min-w-0 border-l border-[#a80000] flex flex-col font-bold text-[14px] overflow-hidden ${Num}`}>
      <div className="h-[29px] shrink-0 border-b border-[#a80000] flex items-center pl-[18px]">
        <div className="w-[15px] h-[15px] bg-[#c8c8c8] text-[#e02020] text-[13px] leading-[15px] text-center font-['Liberation_Serif']">L</div>
        <span className="ml-[19px] text-[#ffff00]">000022</span>
        <span className="ml-[4px] text-[#ffff00] text-[16px] font-normal whitespace-nowrap">深赤湾A</span>
      </div>
      <div className="h-[19px] pt-[1px] shrink-0 border-b border-[#a80000] flex items-center pl-[2px] pr-[3px]">
        <span className="w-[38px] text-[16px] font-normal text-[#a8a8a8]">委比</span>
        <span className={`w-[56px] text-right whitespace-nowrap ${g}`}>-23.02%</span>
        <span className="ml-[4px] w-[36px] text-[16px] font-normal text-[#a8a8a8]">委差</span>
        <span className={`flex-1 text-right ${g}`}>-1170</span>
      </div>
      <div className="h-[153px] shrink-0 border-b border-[#a80000]">
        <Q a="现价" b="15.48" ca={r} c="今开" d="14.86" cb={r} />
        <Q a="涨跌" b="0.63" ca={r} c="最高" d="15.50" cb={r} />
        <Q a="涨幅" b="4.24%" ca={r} c="最低" d="14.75" cb={g} />
        <Q a="现量" b="1536" ca="text-[#c000c0]" c="均价" d="15.22" cb={r} />
        <Q a="总量" b="115047" ca="text-[#c8c800]" c="量比" d="2.74" cb={r} />
        <Q a="涨停" b="16.34" ca={r} c="跌停" d="13.37" cb={g} />
        <Q a="总笔" b="6787" ca={gy} c="每笔" d="17.0" cb={gy} />
        <Q a="外盘" b="67057" ca={r} c="内盘" d="47990" cb={g} />
      </div>
      <div className="h-[59px] pt-[1px] shrink-0 border-b border-[#a80000]">
        <Q a="换手" b="2.48%" ca={gy} c="股本" d="6.45亿" cb={gy} />
        <Q a="净资" b="5.91" ca={gy} c="流通" d="4.65亿" cb={gy} />
        <Q a="收益(一)" b="0.202" ca={gy} c="PE(动)" d="19.2" cb={gy} s />
      </div>
      <div className="h-[78px] pt-[1px] shrink-0 border-b border-[#a80000]">
        <Flow a="净流入额" b="3022" c="17%" />
        <Flow a="大宗流入" b="1877" c="11%" />
        <Flow a="5日净流入额" b="4547" c="11%" />
        <Flow a="5日大宗流入" b="1905" c="4%" />
      </div>
      <div className="flex-1 min-h-0 -mt-[2px]">
        <div className="h-[18px] grid grid-cols-[58px_68px_53px] items-center">
          <span className="text-right text-[#a8a8a8]">15:00:18</span>
          <span className="text-right text-[#ff3232]">15.48</span>
          <span className="text-right text-[#c8c800]">2</span>
        </div>
        {tickVols.map((v, i) => (
          <div key={i} className="h-[18px] grid grid-cols-[58px_68px_53px] items-center">
            <span className="text-right text-[#808080]">{24 + i}</span>
            <span className="text-right text-[#ff3232]">15.48</span>
            <span className="text-right text-[#c8c800]">{v}</span>
          </div>
        ))}
      </div>
    </div>
  );
}

/* ---------- menu ---------- */
type M = { t?: string; k?: string; arrow?: boolean; dis?: boolean; sep?: boolean };
const menu: M[] = [
  { t: "上证A股", k: "1" }, { t: "上证B股", k: "2" }, { t: "深证A股", k: "3" }, { t: "深证B股", k: "4" }, { t: "深沪A股", k: "7" }, { t: "深沪B股", k: "8" },
  { t: "中小企业", k: "9" }, { t: "创业板", k: "12" }, { t: "风险警示板" }, { t: "退市整理板", k: "14" }, { t: "三板证券" }, { sep: true },
  { t: "交易所基金", arrow: true }, { t: "交易所债券", arrow: true }, { t: "深沪权证" }, { t: "所有深沪品种" }, { t: "所有深沪指数" }, { sep: true },
  { t: "板块指数", k: "15" }, { t: "券商组合", k: "13" }, { t: "定制品种" }, { sep: true },
  { t: "自  选  股" }, { t: "条  件  股" }, { sep: true }, { t: "行业浏览模式", dis: true }, { t: "行情标签设置" },
];
function Menu() {
  return (
    <div className="absolute left-[968px] top-[83px] w-[138px] h-[475px] bg-[#f0f0f0] border-t border-l border-white border-r-2 border-b-2 border-r-[#808080] border-b-[#808080] flex">
      <div className="w-[26px] shrink-0 bg-[#c8c8c8]" />
      <div className="flex-1 pl-[4px] text-[12px] text-[#111] flex flex-col">
        {menu.map((m, i) =>
          m.sep ? (
            <div key={i} className="h-[3px] my-[0.5px] border-t border-[#a0a0a0] border-b border-b-white" />
          ) : (
            <div key={i} className={`h-[20px] shrink-0 flex items-center justify-between pr-[15px] whitespace-nowrap relative ${m.dis ? "text-[#a8a8a8]" : ""}`}>
              <span className="whitespace-pre">{m.t}</span>
              {m.k && <span className={Num}>{m.k}</span>}
              {m.arrow && <span className="absolute left-[96px] top-[7px] border-l-[4px] border-l-black border-y-[4px] border-y-transparent" />}
            </div>
          )
        )}
      </div>
    </div>
  );
}

/* ---------- bottom ---------- */
const cell = "h-[19px] flex items-center justify-center text-[12px] whitespace-nowrap border-r border-[#a80000]";
function BottomTabs() {
  const tabs: [string, string][] = [
    ["扩展区", "w-[44px] text-[#c8c8c8]"], ["关联报价", "w-[56px] text-[#c8c8c8]"], ["资金分布", "w-[56px] text-[#c8c8c8]"], ["资金驱动", "w-[56px] text-[#c8c8c8]"],
    ["机构攻略", "w-[56px] text-[#c8c800]"], ["行业攻略", "w-[56px] text-[#c8c800]"], ["核心题材", "w-[56px] text-[#c8c800]"], ["主力轨迹", "w-[56px] text-[#c8c8c8]"],
    ["逐笔委托", "w-[56px] text-[#c8c8c8]"], ["热点题材", "w-[56px] text-[#c8c800]"], ["一致预期", "w-[56px] text-[#c8c800]"], ["综合资讯", "w-[56px] text-[#c8c800]"],
    ["网摘资讯", "w-[56px] text-[#c8c800]"], ["行业资讯", "w-[56px] text-[#c8c800]"], ["委托成交", "w-[56px] text-[#c8c8c8]"], ["持仓股份", "w-[56px] text-[#c8c8c8]"], ["帐户资金", "w-[56px] text-[#c8c8c8]"],
  ];
  return (
    <div className={`h-[19px] shrink-0 flex bg-black border-b border-[#a80000] ${Num}`}>
      <div className="w-[1006px] shrink-0 flex bg-[#1c1c1c] border-r border-[#a80000] pl-[1px]">
        {tabs.map(([t, c]) => <div key={t} className={`${cell} ${c}`}>{t}</div>)}
      </div>
      <div className="w-[51px] shrink-0 flex bg-[#111] text-[#c8c8c8] items-center justify-center text-[12px] whitespace-nowrap border-r border-[#a80000]">图文F10</div>
      {[["队列", "text-[#54fcfc] bg-[#143030]"], ["分布", "text-[#c8c8c8]"], ["龙虎", "text-[#c8c8c8]"], ["风向", "text-[#c8c8c8]"]].map(([t, c]) => (
        <div key={t} className={`w-[47px] ${cell} ${c}`}>{t}</div>
      ))}
      <div className="flex-1 grid grid-cols-8 border-l border-[#a80000]">
        {["笔", "价", "细", "盘", "势", "指", "值", "筹"].map((t) => (
          <div key={t} className={`${cell} ${t === "细" ? "text-[#54fcfc] bg-[#143030]" : "text-[#c8c8c8]"}`}>{t}</div>
        ))}
      </div>
    </div>
  );
}

const S = ({ w, children, cls }: { w: string; children: React.ReactNode; cls?: string }) => (
  <span className={`${w} shrink-0 whitespace-nowrap ${cls ?? ""}`}>{children}</span>
);
function Signal() {
  const Block = () => (
    <svg width={50} height={15} viewBox="0 0 50 15" shapeRendering="crispEdges">
      <rect x={0.5} y={1.5} width={49} height={6} fill="#e8e8e0" stroke="#a0a0a0" />
      <path d="M12.500 1v7M25.500 1v7M37.500 1v7" stroke="#a0a0a0" />
      <rect x={15} y={2} width={4} height={6} fill="#e02020" />
      <rect x={19} y={2} width={4} height={6} fill="#10a020" />
      {[0, 8, 16, 24, 32, 40, 44].map((x) => (
        <g key={x}>
          <rect x={x} y={10} width={6} height={2} fill="#108010" />
          <rect x={x} y={13} width={6} height={2} fill="#108010" />
        </g>
      ))}
    </svg>
  );
  return (
    <div className="flex gap-[2px] w-[106px] shrink-0 ml-[10px]">
      <Block />
      <Block />
    </div>
  );
}
function Status() {
  const gr = "font-bold text-[#0a7a0a] text-[12px]";
  return (
    <div className={`flex-1 bg-[#d4d0c8] border-t border-white flex items-center text-[12px] text-[#111] ${Num}`}>
      <div className="ml-[3px] w-[14px] h-[14px] rounded-[2px] bg-gradient-to-b from-[#ffd060] to-[#e88a10] border border-[#b87010] shrink-0 flex items-center justify-center">
        <div className="w-[7px] h-[7px] bg-[#fff0c0] border border-[#b87010]" />
      </div>
      <S w="w-[42px] ml-[3px]" cls="font-bold text-[13px] text-[#f03010]">通达信</S>
      <S w="w-[25px]">上证</S>
      <S w="w-[53px]" cls={gr}>2177.91</S>
      <S w="w-[45px]" cls={gr}>-21.40</S>
      <S w="w-[47px]" cls={gr}>-0.97%</S>
      <S w="w-[44px]">652.5亿</S>
      <S w="w-[25px]">沪深</S>
      <S w="w-[56px]" cls={gr}>2447.31</S>
      <S w="w-[42px]" cls={gr}>-20.57</S>
      <S w="w-[46px]" cls={gr}>-0.83%</S>
      <S w="w-[45px]">463.5亿</S>
      <S w="w-[29px]">创业</S>
      <S w="w-[51px]" cls={gr}>889.38</S>
      <S w="w-[43px]" cls={gr}>-14.25</S>
      <S w="w-[47px]" cls={gr}>-1.58%</S>
      <S w="w-[38px]">127.9亿</S>
      <Signal />
      <div className="h-[17px] ml-[0px] border-l border-[#808080] border-r-0 mr-[4px]" />
      <span className="whitespace-nowrap">高级行情_上海电信2</span>
      <div className="ml-auto mr-[4px] flex items-center gap-[2px]">
        <svg width={96} height={16} viewBox="0 0 96 16">
          <rect x={0.5} y={1.5} width={13} height={13} fill="#fff" stroke="#6a98c8" />
          <path d="M4 7h6M4 10h6" stroke="#e0a020" />
          <rect x={17.5} y={1.5} width={15} height={13} fill="#cfe0f4" stroke="#7a94b8" />
          <path d="M18 2l7 7 7-7M18 14l5-6M32 14l-5-6" stroke="#7a94b8" fill="none" />
          <ellipse cx={44} cy={8} rx={6} ry={7.5} fill="#d8c820" stroke="#806810" />
          <text x={41.5} y={12} fontSize={9} fontWeight={700} fill="#403000" fontFamily="Liberation Sans">$</text>
          <path d="M60 14l3-10 3 10M58 5a6 6 0 0 1 10 0M60 7a3 3 0 0 1 6 0" stroke="#808080" fill="none" />
          <path d="M80 4l-4 5h2.500l-2.500 3h8l-2.500-3H84z" fill="#808080" />
          <rect x={78} y={13} width={4} height={2} fill="#808080" />
          <rect x={92} y={3} width={2} height={7} fill="#808080" />
          <rect x={92} y={12} width={2} height={2} fill="#808080" />
        </svg>
      </div>
    </div>
  );
}

export default function App() {
  return (
    <div className={`relative w-[1440px] h-[869px] bg-black overflow-hidden flex flex-col font-['Noto_Sans_CJK_SC','Liberation_Sans',sans-serif]`}>
      <TopBar />
      <Toolbar />
      <div className="h-[750px] shrink-0 flex">
        <SideTabs />
        <Center />
        <Middle />
        <Right />
      </div>
      <BottomTabs />
      <Status />
      <Menu />
      <Watermark />
    </div>
  );
}
